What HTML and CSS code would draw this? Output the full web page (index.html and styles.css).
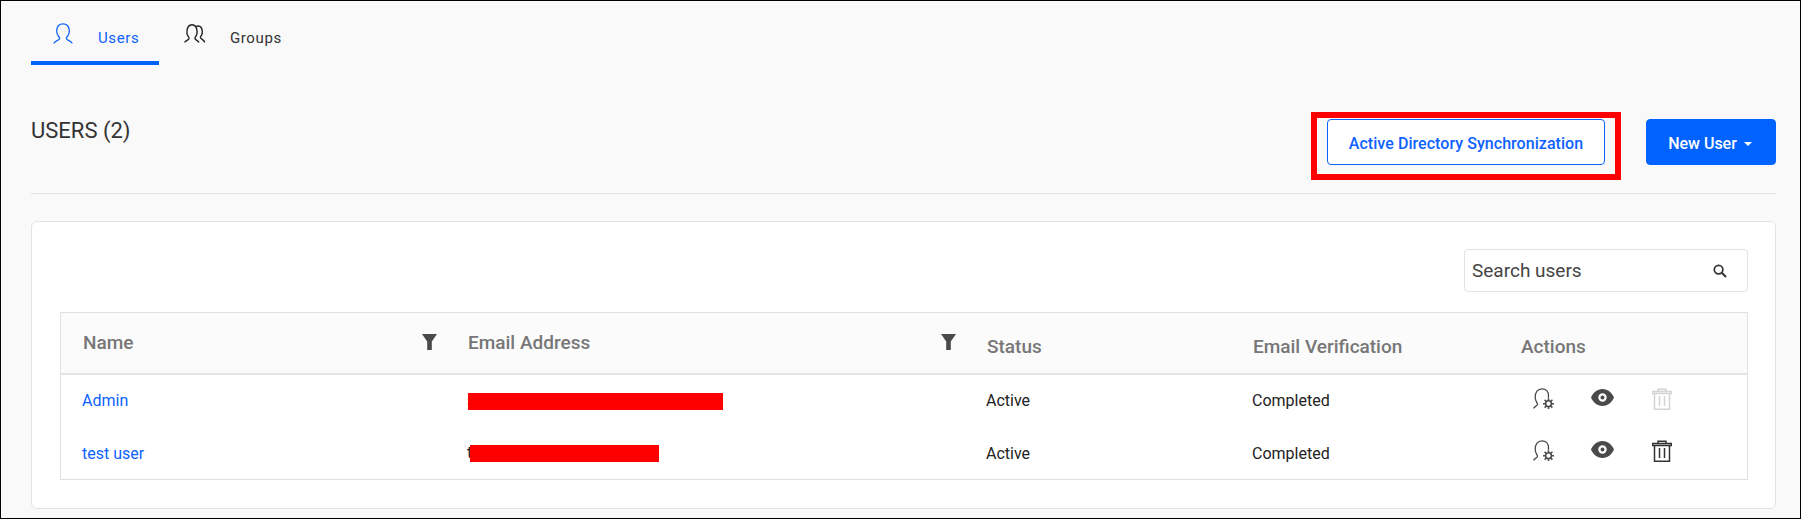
FILE: index.html
```html
<!DOCTYPE html>
<html lang="en">
<head>
<meta charset="utf-8">
<title>Users</title>
<link rel="stylesheet" href="styles.css">
</head>
<body>
<div class="page">
  <nav class="tabs">
    <a class="tab tab-active">
      <svg class="tab-icon" viewBox="0 0 20 21" fill="none" stroke="currentColor" stroke-width="1.300"><path d="M.8 20.500c.3-2.500 5-3 5.800-4.700.3-1-.5-1.700-1.500-3.200-1.200-1.800-1.600-3.700-1.400-5.500C4.100 3.300 6.600.8 10 .8s5.900 2.500 6.300 6.300c.2 1.800-.2 3.700-1.400 5.500-1 1.500-1.800 2.200-1.500 3.200.8 1.700 5.500 2.200 5.800 4.700"/></svg>
      <span>Users</span>
    </a>
    <a class="tab tab-second">
      <svg class="tab-icon tab-icon-wide" viewBox="0 0 22 19" fill="none" stroke="#222" stroke-width="1.400"><path d="M.7 18.500c.3-2 3.700-2.200 4.300-3.800.3-1-.5-1.700-1.100-2.800-.8-1.400-1.200-3-1-4.500C3.200 3.400 4.900.7 8 .7s4.800 2.700 5.100 6.700c.1 1.500-.2 3.100-1 4.500-.6 1.100-1.400 1.800-1.100 2.800.5 1.600 3.400 1.800 4 3.800"/><path d="M12.300 2.600c.5-.4 1.200-.6 1.800-.6 2.500 0 4 2.300 4.200 5.500.1 1.300-.2 2.700-.9 3.900-.5.900-1.100 1.500-.9 2.300.4 1.400 3.700 1.700 4.200 4.800"/></svg>
      <span>Groups</span>
    </a>
  </nav>

  <header class="head">
    <h1 class="title">USERS (2)</h1>
    <div class="head-actions">
      <button class="btn btn-outline">Active Directory Synchronization</button>
      <button class="btn btn-solid">New User<span class="caret"></span></button>
    </div>
    <div class="callout"></div>
  </header>

  <section class="card">
    <div class="search-row">
      <label class="search">
        <span class="search-text">Search users</span>
        <svg class="search-icon" viewBox="0 0 14 14" fill="none" stroke="#333" stroke-width="1.700"><circle cx="5.600" cy="5.600" r="4.300"/><path d="M8.800 8.800l4.200 4.200" stroke-width="2"/></svg>
      </label>
    </div>

    <div class="table">
      <div class="row row-head">
        <div class="cell c-name">Name<svg class="filter" viewBox="0 0 15 16"><path fill="#4a4a4a" d="M0 0h15L9.800 7.500V16H5.200V7.500z"/></svg></div>
        <div class="cell c-mail">Email Address<svg class="filter" viewBox="0 0 15 16"><path fill="#4a4a4a" d="M0 0h15L9.800 7.500V16H5.200V7.500z"/></svg></div>
        <div class="cell c-status low">Status</div>
        <div class="cell c-verify low">Email Verification</div>
        <div class="cell c-actions low">Actions</div>
      </div>

      <div class="row row-top">
        <div class="cell c-name"><a class="link">Admin</a></div>
        <div class="cell c-mail"><span class="mail">s<span class="redact redact-a"></span></span></div>
        <div class="cell c-status">Active</div>
        <div class="cell c-verify">Completed</div>
        <div class="cell c-actions">
          <svg class="act act-user" viewBox="0 0 21 21" fill="none" stroke="#4a4a4a" stroke-width="1.300"><path d="M.7 20.500c0-2 3.800-2.300 3.800-4.300 0-1.500-2.300-3-2.300-7C2.200 4.300 4.700.8 9 .8c4 0 6.500 3 6.500 7 0 .8-.1 1.500-.2 2"/><g stroke-width="1.600"><circle cx="15.500" cy="15.700" r="2.900"/><path d="M15.500 10.200v2M15.500 19.200v2M10 15.700h2M19 15.700h2M11.600 11.800l1.400 1.400M18 18.200l1.400 1.400M11.600 19.600l1.400-1.400M18 13.200l1.400-1.400"/></g></svg>
          <svg class="act act-eye" viewBox="0 0 23 17"><path fill="#4a4a4a" fill-rule="evenodd" d="M11.500 0C6 0 2 4 0 8.500 2 13 6 17 11.500 17S21 13 23 8.500C21 4 17 0 11.500 0zm0 4.300a4.200 4.200 0 1 1 0 8.400 4.200 4.200 0 0 1 0-8.400zm0 2.200a2 2 0 1 0 0 4 2 2 0 0 0 0-4z"/></svg>
          <svg class="act act-trash is-off" viewBox="0 0 20 22" fill="none" stroke="currentColor" stroke-width="1.500"><path d="M6 3.500V1.200h8v2.300"/><path d="M.5 5.500V3.500h19v2z" stroke-width="1.600"/><path d="M2.500 5.500v15.700h15V5.500"/><path d="M7.500 8v10M12.500 8v10"/></svg>
        </div>
      </div>

      <div class="row">
        <div class="cell c-name"><a class="link">test user</a></div>
        <div class="cell c-mail"><span class="mail">t<span class="redact redact-b"></span></span></div>
        <div class="cell c-status">Active</div>
        <div class="cell c-verify">Completed</div>
        <div class="cell c-actions">
          <svg class="act act-user" viewBox="0 0 21 21" fill="none" stroke="#4a4a4a" stroke-width="1.300"><path d="M.7 20.500c0-2 3.800-2.300 3.800-4.300 0-1.500-2.300-3-2.300-7C2.200 4.300 4.700.8 9 .8c4 0 6.500 3 6.500 7 0 .8-.1 1.500-.2 2"/><g stroke-width="1.600"><circle cx="15.500" cy="15.700" r="2.900"/><path d="M15.500 10.200v2M15.500 19.200v2M10 15.700h2M19 15.700h2M11.600 11.800l1.400 1.400M18 18.200l1.400 1.400M11.600 19.600l1.400-1.400M18 13.200l1.400-1.400"/></g></svg>
          <svg class="act act-eye" viewBox="0 0 23 17"><path fill="#4a4a4a" fill-rule="evenodd" d="M11.500 0C6 0 2 4 0 8.500 2 13 6 17 11.500 17S21 13 23 8.500C21 4 17 0 11.500 0zm0 4.300a4.200 4.200 0 1 1 0 8.400 4.200 4.200 0 0 1 0-8.400zm0 2.200a2 2 0 1 0 0 4 2 2 0 0 0 0-4z"/></svg>
          <svg class="act act-trash" viewBox="0 0 20 22" fill="none" stroke="currentColor" stroke-width="1.500"><path d="M6 3.500V1.200h8v2.300"/><path d="M.5 5.500V3.500h19v2z" stroke-width="1.600"/><path d="M2.500 5.500v15.700h15V5.500"/><path d="M7.500 8v10M12.500 8v10"/></svg>
        </div>
      </div>
    </div>
  </section>
</div>
</body>
</html>
```
FILE: styles.css
```css
* { box-sizing: border-box; }
html, body { margin: 0; padding: 0; }
body { font-family: Roboto, "Liberation Sans", sans-serif; color: #333; background: #f9f9f9; }

.page {
  width: 1801px;
  height: 519px;
  border: 1px solid #000;
  padding: 0 24px 0 30px;
  background: #f9f9f9;
  overflow: hidden;
}

.tabs { display: flex; height: 64px; }
.tab {
  display: flex;
  align-items: flex-start;
  height: 64px;
  padding: 22px 0 0 22px;
  font-size: 15px;
  color: #333;
}
.tab span { margin-top: 6px; line-height: 18px; letter-spacing: .6px; }
.tab-active { width: 128px; color: #0d62ff; border-bottom: 4px solid #0062ff; }
.tab-second { padding-left: 25px; }
.tab-icon { width: 20px; height: 21px; margin-right: 25px; }
.tab-icon-wide { width: 22px; height: 19px; margin-top: 1px; margin-right: 24px; }

.head {
  position: relative;
  display: flex;
  justify-content: space-between;
  align-items: flex-start;
  height: 129px;
  border-bottom: 1px solid #e0e0e0;
}
.title { margin: 54px 0 0; font-size: 22px; font-weight: 400; line-height: 24px; color: #333; }
.head-actions { display: flex; gap: 41px; margin-top: 54px; }
.btn {
  height: 46px;
  padding-top: 3px;
  padding-right: 8px;
  border-radius: 4px;
  font-family: Roboto, "Liberation Sans", sans-serif;
  font-size: 16px;
  font-weight: 500;
}
.btn-outline { width: 278px; padding-right: 6px; background: #fff; color: #0d62ff; border: 1px solid #0d62ff; letter-spacing: .05px; }
.btn-solid { width: 130px; background: #0062ff; color: #fff; border: 1px solid #0062ff; }
.caret {
  display: inline-block;
  margin-left: 7px;
  vertical-align: 3px;
  border-left: 4.500px solid transparent;
  border-right: 4.500px solid transparent;
  border-top: 4.500px solid #fff;
}
.callout {
  position: absolute;
  left: 1280px;
  top: 47px;
  width: 310px;
  height: 68px;
  border: 6px solid #f00;
  pointer-events: none;
}

.card {
  margin-top: 27px;
  height: 288px;
  padding: 27px 27px 0 28px;
  background: #fff;
  border: 1px solid #e0e4e8;
  border-radius: 6px;
}
.search-row { display: flex; justify-content: flex-end; }
.search {
  display: flex;
  align-items: center;
  justify-content: space-between;
  width: 284px;
  height: 43px;
  padding: 0 20px 0 7px;
  border: 1px solid #e2e2e2;
  border-radius: 4px;
}
.search-text { font-size: 19px; color: #444; }
.search-icon { width: 14px; height: 14px; }

.table { margin-top: 20px; border: 1px solid #e0e0e0; }
.row { display: flex; height: 52px; font-size: 16px; color: #222; }
.row-head {
  height: 62px;
  background: #fbfbfb;
  border-bottom: 2px solid #e4e4e4;
  font-size: 19px;
  font-weight: 500;
  color: #777;
}
.cell { display: flex; align-items: center; }
.c-name { width: 385px; padding-left: 21px; }
.c-mail { width: 540px; padding-left: 22px; }
.c-status { width: 266px; }
.c-verify { width: 269px; }
.c-actions { flex: 1; }
.row-top .c-name, .row-top .c-status, .row-top .c-verify { padding-bottom: 2px; }
.row-head .c-name, .row-head .c-mail { justify-content: space-between; padding-bottom: 2px; }
.row-head .c-name { padding-left: 22px; padding-right: 9px; }
.row-head .c-mail { padding-right: 30px; }
.low { padding-top: 6px; }
.row-head .c-status, .row-head .c-verify { padding-left: 1px; }
.filter { width: 15px; height: 16px; }
.link { color: #0d62ff; }
.mail { position: relative; display: block; width: 260px; line-height: 18px; margin-left: -1px; }
.redact { position: absolute; top: 1px; height: 17px; background: #f00; }
.redact-a { left: 1px; width: 255px; }
.redact-b { left: 3px; width: 189px; }
.act { display: block; color: #333; }
.act-user { width: 21px; height: 21px; margin-left: 12px; margin-bottom: 5px; }
.act-eye { width: 23px; height: 17px; margin-left: 37px; margin-bottom: 7px; }
.act-trash { width: 20px; height: 22px; margin-left: 38px; margin-bottom: 4px; }
.is-off { color: #d4d4d4; }
```
